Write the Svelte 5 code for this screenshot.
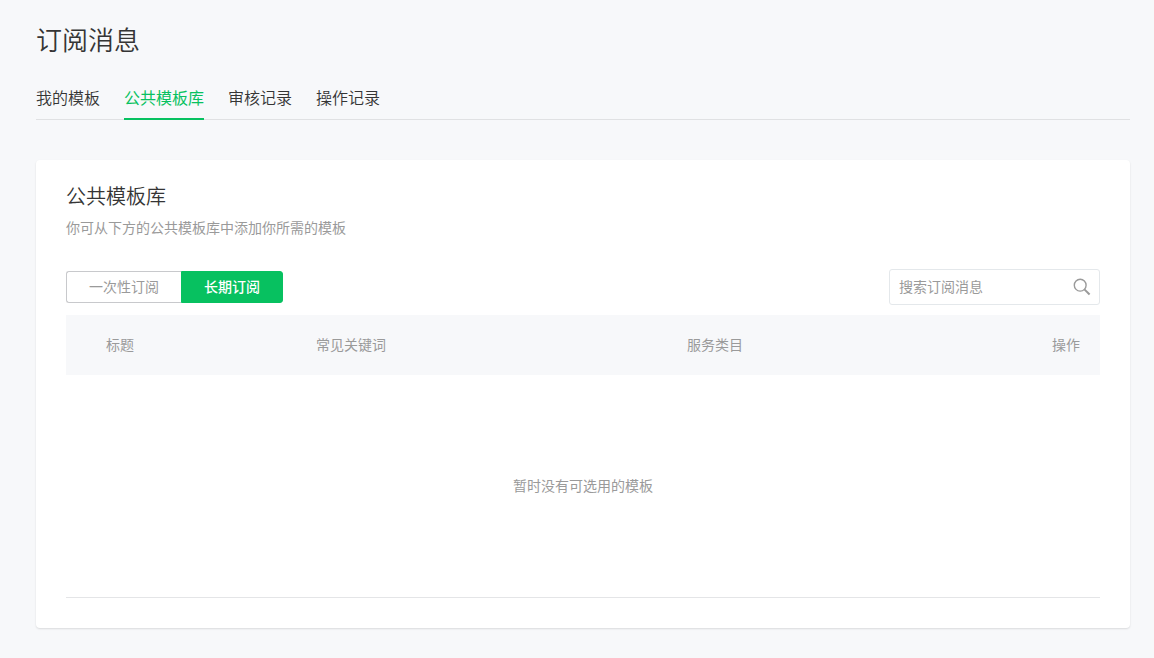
<script>
	let activeTab = $state('library');
	let activeType = $state('long');
	let keyword = $state('');

	const tabs = [
		{ id: 'mine', title: '我的模板' },
		{ id: 'library', title: '公共模板库' },
		{ id: 'audit', title: '审核记录' },
		{ id: 'logs', title: '操作记录' }
	];

	const types = [
		{ id: 'once', title: '一次性订阅' },
		{ id: 'long', title: '长期订阅' }
	];
</script>

<main class="page">
	<h1 class="page-title">订阅消息</h1>

	<nav class="tabs">
		{#each tabs as tab}
			<a
				href="#{tab.id}"
				class="tab"
				class:active={activeTab === tab.id}
				aria-current={activeTab === tab.id ? 'page' : undefined}
				onclick={() => (activeTab = tab.id)}
			>
				{tab.title}
			</a>
		{/each}
	</nav>

	<section class="card">
		<h2 class="card-title">公共模板库</h2>
		<p class="card-desc">你可从下方的公共模板库中添加你所需的模板</p>

		<div class="toolbar">
			<div class="segment">
				{#each types as type}
					<button
						type="button"
						class="segment-btn"
						class:active={activeType === type.id}
						aria-pressed={activeType === type.id}
						onclick={() => (activeType = type.id)}
					>
						{type.title}
					</button>
				{/each}
			</div>

			<form class="search" onsubmit={(e) => e.preventDefault()}>
				<input
					type="text"
					class="search-input"
					placeholder="搜索订阅消息"
					aria-label="搜索订阅消息"
					bind:value={keyword}
				/>
				<button type="submit" class="search-btn" aria-label="搜索">
					<svg width="18" height="18" viewBox="0 0 18 18" fill="none" stroke="#9a9a9a">
						<circle cx="7.2" cy="7.2" r="5.9" stroke-width="1.4" />
						<path d="M11.4 11.4L16.6 16.5" stroke-width="2" />
					</svg>
				</button>
			</form>
		</div>

		<table class="table">
			<thead>
				<tr>
					<th class="col-title">标题</th>
					<th class="col-keyword">常见关键词</th>
					<th class="col-category">服务类目</th>
					<th class="col-action">操作</th>
				</tr>
			</thead>
			<tbody>
				<tr>
					<td class="empty" colspan="4">暂时没有可选用的模板</td>
				</tr>
			</tbody>
		</table>
	</section>
</main>

<style>
	:global(body) {
		background-color: #f7f8fa;
	}

	.page {
		padding: 21px 24px 30px 36px;
		font-family: 'Noto Sans CJK SC', sans-serif;
		font-size: 14px;
		line-height: 20px;
		color: #353535;
	}

	.page-title {
		margin: 0;
		font-size: 26px;
		line-height: 36px;
		font-weight: 350;
	}

	.tabs {
		display: flex;
		gap: 24px;
		margin-top: 28px;
		border-bottom: 1px solid #e0e1e3;
	}

	.tab {
		margin-bottom: -1px;
		padding-bottom: 9px;
		border-bottom: 2px solid transparent;
		font-size: 16px;
		line-height: 24px;
		font-weight: 350;
		color: #353535;
		text-decoration: none;
	}

	.tab.active {
		border-bottom-color: #07c160;
		color: #07c160;
		font-weight: 400;
	}

	.card {
		margin-top: 40px;
		padding: 22px 30px 30px;
		background-color: #fff;
		border-radius: 4px;
		box-shadow: 0 1px 2px rgba(0, 0, 0, 0.12);
	}

	.card-title {
		margin: 0;
		font-size: 20px;
		line-height: 28px;
		font-weight: 350;
	}

	.card-desc {
		margin: 7px 0 0;
		color: #9a9a9a;
	}

	.toolbar {
		display: flex;
		align-items: center;
		justify-content: space-between;
		margin-top: 32px;
	}

	.segment {
		display: flex;
	}

	.segment-btn {
		height: 32px;
		padding: 0 22px 2px;
		border: 1px solid #c8c9cc;
		background-color: #fff;
		color: #9a9a9a;
		font: inherit;
		cursor: pointer;
	}

	.segment-btn:first-child {
		border-right: 0;
		border-radius: 3px 0 0 3px;
	}

	.segment-btn:last-child {
		border-radius: 0 3px 3px 0;
	}

	.segment-btn.active {
		border-color: #07c160;
		background-color: #07c160;
		color: #fff;
		font-weight: 500;
	}

	.search {
		display: flex;
		align-items: center;
		box-sizing: border-box;
		width: 211px;
		height: 36px;
		padding: 0 8px 0 9px;
		border: 1px solid #e4e8eb;
		border-radius: 3px;
	}

	.search-input {
		flex: 1;
		min-width: 0;
		padding: 0 0 2px;
		border: 0;
		outline: 0;
		background: none;
		font: inherit;
		color: #353535;
	}

	.search-input::placeholder {
		color: #9a9a9a;
		opacity: 1;
	}

	.search-btn {
		display: flex;
		padding: 0;
		border: 0;
		background: none;
		cursor: pointer;
	}

	.table {
		width: 100%;
		margin-top: 10px;
		border-collapse: collapse;
		table-layout: fixed;
	}

	th {
		box-sizing: border-box;
		height: 60px;
		padding: 0 0 2px;
		background-color: #f7f8fa;
		color: #9a9a9a;
		font-weight: 400;
		text-align: left;
	}

	.col-title {
		width: 250px;
		padding-left: 40px;
	}

	.col-keyword {
		width: 371px;
	}

	.col-action {
		padding-right: 20px;
		text-align: right;
	}

	.empty {
		box-sizing: border-box;
		height: 222px;
		padding: 0 0 2px;
		border-bottom: 1px solid #e4e5e7;
		color: #9a9a9a;
		text-align: center;
	}
</style>
